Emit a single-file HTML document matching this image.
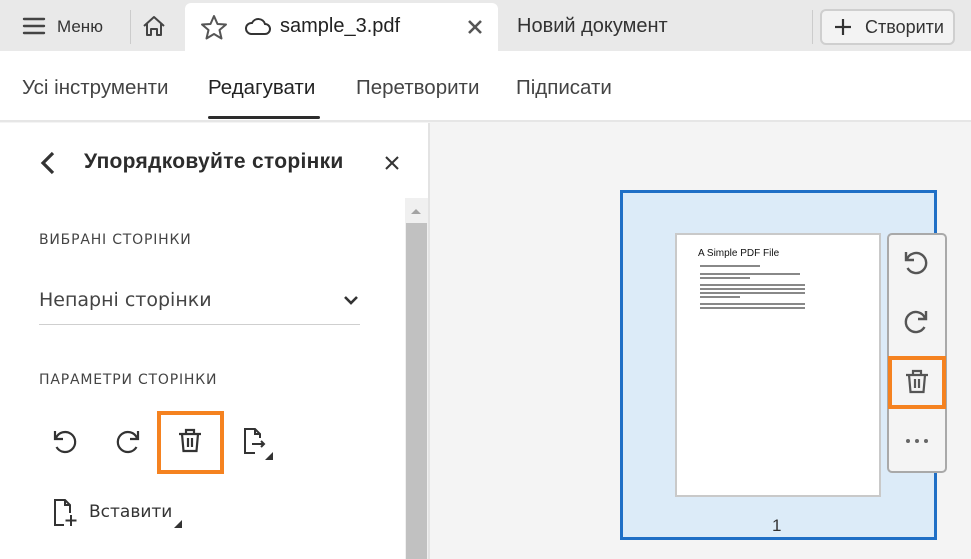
<!DOCTYPE html>
<html><head><meta charset="utf-8"><style>
*{margin:0;padding:0;box-sizing:border-box}
body{width:971px;height:559px;overflow:hidden;background:#f4f4f4;font-family:"Liberation Sans",sans-serif;position:relative;color:#2c2c2c}
.abs{position:absolute}
.top{left:0;top:0;width:971px;height:51px;background:#e9e9e9}
.tab{left:185px;top:3px;width:313px;height:48px;background:#fff;border-radius:6px 6px 0 0}
.t{position:absolute;white-space:nowrap}
.bar2{left:0;top:51px;width:971px;height:71px;background:#fff;border-bottom:2px solid #e6e6e6}
.panel{left:0;top:123px;width:430px;height:436px;background:#fff;border-right:2px solid #e3e3e3}
.ui{font-family:"DejaVu Sans","Liberation Sans",sans-serif}
</style></head><body>
<div class="abs top"></div>
<svg class="abs" style="left:22px;top:16px" width="24" height="20"><g stroke="#444" stroke-width="2.4" stroke-linecap="round"><line x1="2" y1="3" x2="22" y2="3"/><line x1="2" y1="10" x2="22" y2="10"/><line x1="2" y1="17" x2="22" y2="17"/></g></svg>
<div class="t" style="left:57px;top:17px;font-size:17px;color:#333">Меню</div>
<div class="abs" style="left:130px;top:10px;width:1px;height:34px;background:#ccc"></div>
<svg class="abs" style="left:141px;top:14px" width="26" height="24"><path d="M3 12 L13 3 L23 12 M6 10 V21 H10 V15 H16 V21 H20 V10" fill="none" stroke="#444" stroke-width="2" stroke-linejoin="round"/></svg>
<div class="abs tab"></div>
<svg class="abs" style="left:200px;top:14px" width="28" height="26"><path d="M14 2 L17.5 10 L26 10.5 L19.5 16 L21.5 24.5 L14 20 L6.5 24.5 L8.5 16 L2 10.5 L10.5 10 Z" fill="none" stroke="#555" stroke-width="2" stroke-linejoin="round"/></svg>
<svg class="abs" style="left:244px;top:17px" width="28" height="20"><path d="M7 17 H21 A5 5 0 0 0 21 7 A7 7 0 0 0 8 6 A5.5 5.5 0 0 0 7 17 Z" fill="none" stroke="#333" stroke-width="2"/></svg>
<div class="t" style="left:280px;top:15px;font-size:20px;color:#222">sample_3.pdf</div>
<svg class="abs" style="left:467px;top:19px" width="16" height="16"><g stroke="#555" stroke-width="2.6"><line x1="2" y1="2" x2="14" y2="14"/><line x1="14" y1="2" x2="2" y2="14"/></g></svg>
<div class="t" style="left:517px;top:15px;font-size:20px;color:#333">Новий документ</div>
<div class="abs" style="left:812px;top:10px;width:1px;height:34px;background:#ccc"></div>
<div class="abs" style="left:820px;top:9px;width:135px;height:36px;border:2px solid #cfcfcf;border-radius:6px;background:#f3f3f3"></div>
<svg class="abs" style="left:834px;top:18px" width="18" height="18"><g stroke="#333" stroke-width="2.2"><line x1="9" y1="1" x2="9" y2="17"/><line x1="1" y1="9" x2="17" y2="9"/></g></svg>
<div class="t" style="left:865px;top:17px;font-size:18px;color:#333">Створити</div>

<div class="abs bar2"></div>
<div class="t" style="left:22px;top:76px;font-size:20.5px;color:#444">Усі інструменти</div>
<div class="t" style="left:208px;top:76px;font-size:20.5px;color:#222">Редагувати</div>
<div class="abs" style="left:208px;top:116px;width:112px;height:3px;background:#2c2c2c;border-radius:2px"></div>
<div class="t" style="left:356px;top:76px;font-size:20.5px;color:#444">Перетворити</div>
<div class="t" style="left:516px;top:76px;font-size:20.5px;color:#444">Підписати</div>

<div class="abs panel"></div>
<svg class="abs" style="left:38px;top:150px" width="18" height="26"><path d="M15 3 L5 13 L15 23" fill="none" stroke="#333" stroke-width="3.2"/></svg>
<div class="t" style="left:84px;top:150px;font-size:21px;font-weight:bold;color:#2c2c2c;letter-spacing:0.3px">Упорядковуйте сторінки</div>
<svg class="abs" style="left:385px;top:156px" width="14" height="14"><g stroke="#333" stroke-width="2"><line x1="1" y1="1" x2="13" y2="13"/><line x1="13" y1="1" x2="1" y2="13"/></g></svg>
<div class="t ui" style="left:39px;top:232px;font-size:14px;letter-spacing:0.8px;color:#444">ВИБРАНІ СТОРІНКИ</div>
<div class="t ui" style="left:39px;top:289px;font-size:19px;color:#444">Непарні сторінки</div>
<svg class="abs" style="left:343px;top:294px" width="16" height="12"><path d="M2 3 L8 9 L14 3" fill="none" stroke="#333" stroke-width="2.6"/></svg>
<div class="abs" style="left:39px;top:324px;width:321px;height:1px;background:#cfcfcf"></div>
<div class="t ui" style="left:39px;top:372px;font-size:14px;letter-spacing:0.8px;color:#444">ПАРАМЕТРИ СТОРІНКИ</div>
<div class="abs" style="left:405px;top:198px;width:23px;height:361px;background:#f0f0f0"></div>
<div class="abs" style="left:406px;top:223px;width:21px;height:336px;background:#c1c1c1"></div>
<svg class="abs" style="left:410px;top:207px" width="12" height="8"><path d="M1 7 L6 2 L11 7 Z" fill="#a3a3a3"/></svg>
<!-- tools -->
<svg class="abs" style="left:50px;top:427px" width="30" height="30"><path d="M6 11 A10 10 0 1 1 6.5 20" fill="none" stroke="#333" stroke-width="2.2"/><path d="M5 4 V12 H13" fill="none" stroke="#333" stroke-width="2.2"/></svg>
<svg class="abs" style="left:113px;top:427px" width="30" height="30"><path d="M24 11 A10 10 0 1 0 23.5 20" fill="none" stroke="#333" stroke-width="2.2"/><path d="M25 4 V12 H17" fill="none" stroke="#333" stroke-width="2.2"/></svg>
<div class="abs" style="left:157px;top:411px;width:67px;height:63px;border:4px solid #f58220"></div>
<svg class="abs" style="left:176px;top:427px" width="28" height="28"><g fill="none" stroke="#333" stroke-width="2.2"><line x1="3" y1="7" x2="25" y2="7"/><path d="M10 7 V3 H18 V7"/><path d="M6 7 L7.5 24 H20.5 L22 7"/><line x1="12" y1="11" x2="12" y2="20"/><line x1="16" y1="11" x2="16" y2="20"/></g></svg>
<svg class="abs" style="left:242px;top:427px" width="32" height="34"><g fill="none" stroke="#333" stroke-width="2"><path d="M13 26 H3 V2 H13 L18 7 V11"/><path d="M13 2 V7 H18"/><line x1="10" y1="17" x2="22" y2="17"/><path d="M19 14 L22 17 L19 20"/></g><path d="M31 25 L31 33 L23 33 Z" fill="#333"/></svg>
<svg class="abs" style="left:52px;top:498px" width="30" height="30"><g fill="none" stroke="#333" stroke-width="2"><path d="M12 27 H3 V2 H13 L18 7 V15"/><path d="M13 2 V7 H18"/><line x1="19" y1="17" x2="19" y2="28"/><line x1="13.5" y1="22.5" x2="24.5" y2="22.5"/></g></svg>
<div class="t ui" style="left:89px;top:502px;font-size:17px;color:#333">Вставити</div>
<svg class="abs" style="left:174px;top:520px" width="9" height="9"><path d="M8 0 L8 8 L0 8 Z" fill="#333"/></svg>

<!-- page -->
<div class="abs" style="left:620px;top:190px;width:317px;height:350px;background:#dcebf8;border:3px solid #1f6fc6"></div>
<div class="abs" style="left:675px;top:233px;width:206px;height:264px;background:#fff;border:2px solid #c9c9c9"></div>
<div class="t" style="left:698px;top:248px;font-size:10px;color:#111">A Simple PDF File</div>
<div class="abs" style="left:700px;top:265px;width:60px;height:2px;background:#888"></div>
<div class="abs" style="left:700px;top:273px;width:100px;height:2px;background:#888"></div>
<div class="abs" style="left:700px;top:277px;width:50px;height:2px;background:#888"></div>
<div class="abs" style="left:700px;top:284px;width:105px;height:2px;background:#888"></div>
<div class="abs" style="left:700px;top:288px;width:105px;height:2px;background:#888"></div>
<div class="abs" style="left:700px;top:292px;width:105px;height:2px;background:#888"></div>
<div class="abs" style="left:700px;top:296px;width:40px;height:2px;background:#888"></div>
<div class="abs" style="left:700px;top:303px;width:105px;height:2px;background:#888"></div>
<div class="abs" style="left:700px;top:307px;width:105px;height:2px;background:#888"></div>
<div class="t" style="left:772px;top:516px;font-size:17px;color:#333">1</div>
<div class="abs" style="left:887px;top:233px;width:60px;height:240px;background:#f4f4f4;border:2px solid #a9a9a9;border-radius:5px"></div>
<svg class="abs" style="left:901px;top:248px" width="30" height="30"><path d="M6 11 A10 10 0 1 1 6.5 20" fill="none" stroke="#555" stroke-width="2.4"/><path d="M5 4 V12 H13" fill="none" stroke="#555" stroke-width="2.4"/></svg>
<svg class="abs" style="left:901px;top:307px" width="30" height="30"><path d="M24 11 A10 10 0 1 0 23.5 20" fill="none" stroke="#555" stroke-width="2.4"/><path d="M25 4 V12 H17" fill="none" stroke="#555" stroke-width="2.4"/></svg>
<div class="abs" style="left:888px;top:356px;width:58px;height:53px;border:4px solid #f58220;background:#f4f4f4"></div>
<svg class="abs" style="left:903px;top:368px" width="28" height="28"><g fill="none" stroke="#555" stroke-width="2.2"><line x1="3" y1="7" x2="25" y2="7"/><path d="M10 7 V3 H18 V7"/><path d="M6 7 L7.5 24 H20.5 L22 7"/><line x1="12" y1="11" x2="12" y2="20"/><line x1="16" y1="11" x2="16" y2="20"/></g></svg>
<svg class="abs" style="left:905px;top:438px" width="24" height="6"><g fill="#666"><circle cx="3" cy="3" r="2"/><circle cx="12" cy="3" r="2"/><circle cx="21" cy="3" r="2"/></g></svg>
</body></html>
